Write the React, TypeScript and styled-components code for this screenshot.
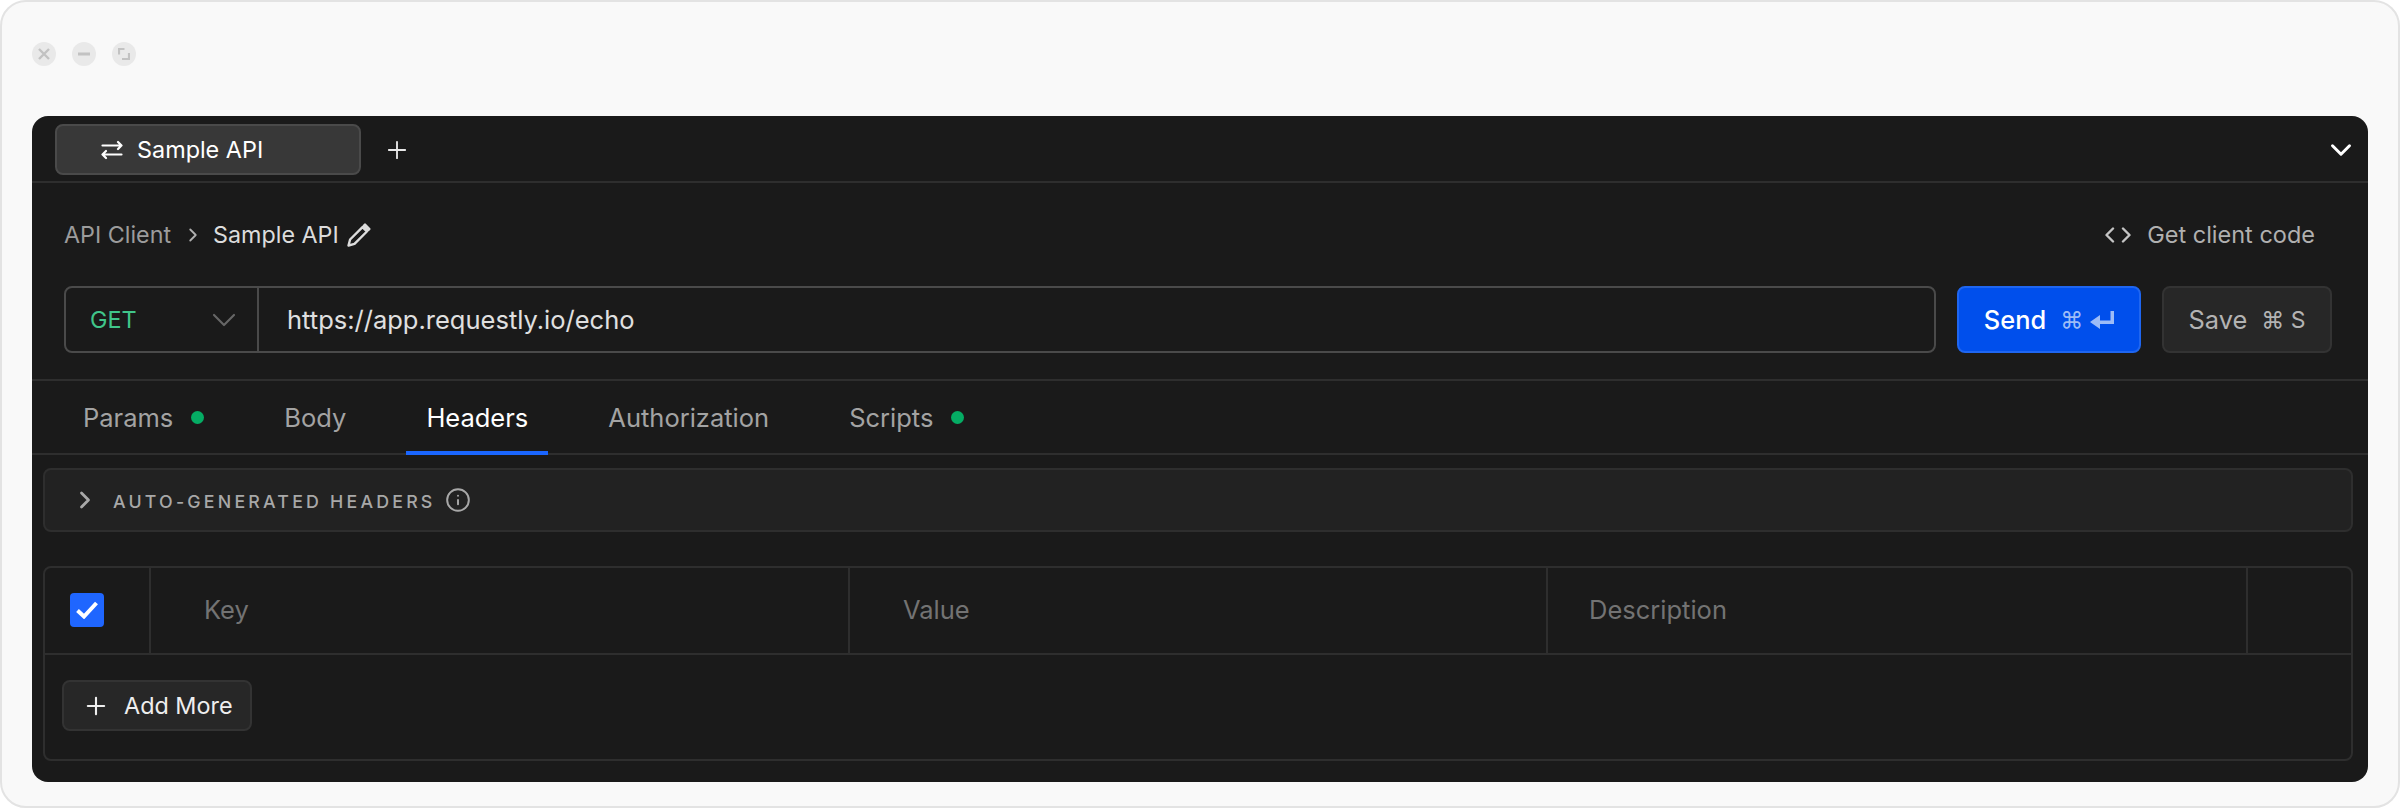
import React from "react";
import styled, { createGlobalStyle } from "styled-components";
import { ChevronDown, ChevronRight, Info, Plus } from "lucide-react";

const Global = createGlobalStyle`
  html, body { margin: 0; padding: 0; background: #fff; }
  * { box-sizing: border-box; }
  body { font-family: Inter, "Noto Sans", sans-serif; }
`;

const Frame = styled.div`
  width: 2400px; height: 808px; background: #f9f9f9; border: 2px solid #e3e3e3; border-radius: 26px;
  padding: 40px 30px 24px 30px; display: flex; flex-direction: column; overflow: hidden;
`;
const Controls = styled.div`display: flex; gap: 16px; height: 24px; margin-bottom: 50px;`;
const Dot = styled.div`
  width: 24px; height: 24px; border-radius: 50%; background: #e9e9e9;
  display: flex; align-items: center; justify-content: center; color: #c2c2c2;
`;
const Panel = styled.div`
  flex: 1; background: #1a1a1a; border-radius: 16px; display: flex; flex-direction: column; overflow: hidden;
`;
const TabBar = styled.div`
  height: 67px; flex: none; border-bottom: 2px solid #2e2e2e; display: flex; align-items: flex-start;
  padding: 8px 10px 0 23px;
`;
const RequestTab = styled.div`
  width: 306px; height: 51px; background: #383838; border: 2px solid #4a4a4a; border-radius: 8px;
  display: flex; align-items: center; gap: 14px; padding-left: 44px; color: #fff; font-size: 23.4px;
`;
const NewTab = styled.div`
  margin-left: 22px; height: 51px; display: flex; align-items: center; color: #e8e8e8;
`;
const Collapse = styled.div`
  margin-left: auto; height: 51px; display: flex; align-items: center; color: #fff;
`;
const Header = styled.div`
  height: 103px; flex: none; padding: 0 53px 0 32px; display: flex; align-items: center; justify-content: space-between;
`;
const Crumbs = styled.div`display: flex; align-items: center; font-size: 23.3px; color: #9c9c9c;`;
const CrumbSep = styled.span`display: flex; margin: 0 9px 0 11px; color: #b0b0b0;`;
const CrumbCurrent = styled.span`color: #dcdcdc; margin-right: 7px;`;
const CodeLink = styled.div`display: flex; align-items: center; gap: 16px; font-size: 23.5px; color: #b0b0b0;`;
const RequestRow = styled.div`
  height: 95px; flex: none; padding: 0 36px 0 32px; display: flex; gap: 21px; border-bottom: 2px solid #2e2e2e; align-items: flex-start;
`;
const UrlBox = styled.div`
  flex: 1; height: 67px; border: 2px solid #4a4a4a; border-radius: 8px; display: flex; align-items: stretch;
`;
const Method = styled.div`
  width: 193px; border-right: 2px solid #4a4a4a; display: flex; align-items: center; justify-content: space-between;
  padding: 0 13px 0 24px; color: #40c58a; font-size: 23.4px;
`;
const MethodCaret = styled.span`display: flex; color: #666;`;
const Url = styled.div`
  flex: 1; display: flex; align-items: center; padding-left: 28px; font-size: 25.5px; color: #e0e0e0;
`;
const Action = styled.div<{ $primary?: boolean }>`
  height: 67px; flex: none; width: ${(p) => (p.$primary ? "184px" : "170px")};
  border-radius: 8px; display: flex; align-items: center; justify-content: center; font-size: 25.4px;
  font-weight: ${(p) => (p.$primary ? 450 : 400)};
  background: ${(p) => (p.$primary ? "#004fec" : "#272727")};
  border: 2px solid ${(p) => (p.$primary ? "#1f66f0" : "#333")};
  color: ${(p) => (p.$primary ? "#fff" : "#b3b3b3")};
`;
const Shortcut = styled.span<{ $primary?: boolean }>`
  margin-left: 14px; display: flex; align-items: center; gap: 7px; font-size: 23px; font-weight: 400;
  font-family: Inter, "DejaVu Sans", sans-serif;
  color: ${(p) => (p.$primary ? "#9dbcf7" : "#b3b3b3")};
`;
const Tabs = styled.div`
  height: 74px; flex: none; border-bottom: 2px solid #2e2e2e; display: flex; padding-left: 31px; gap: 40px; align-items: stretch;
`;
const TabItem = styled.div<{ $active?: boolean }>`
  position: relative; padding: 0 20px; display: flex; align-items: center; gap: 18px;
  font-size: 25.5px;
  color: ${(p) => (p.$active ? "#fff" : "#a3a3a3")}; font-weight: ${(p) => (p.$active ? 440 : 400)};
  &::after {
    content: ""; position: absolute; left: 0; right: 0; bottom: -2px; height: 4px;
    background: ${(p) => (p.$active ? "#1a66ff" : "transparent")};
  }
`;
const StatusDot = styled.span`width: 13px; height: 13px; border-radius: 50%; background: #05ac64;`;
const Body = styled.div`flex: 1; padding: 13px 15px 21px 11px; display: flex; flex-direction: column; gap: 34px;`;
const AutoBox = styled.div`
  height: 64px; flex: none; background: #222; border: 2px solid #2e2e2e; border-radius: 8px;
  display: flex; align-items: center; padding-left: 26px; color: #a8a8a8;
`;
const AutoLabel = styled.span`
  margin-left: 14px; padding-top: 2px; font-size: 17.8px; font-weight: 500; letter-spacing: 3.2px;
`;
const AutoInfo = styled.span`display: flex; margin-left: 9px;`;
const Table = styled.div`
  flex: 1; border: 2px solid #2e2e2e; border-radius: 8px; display: flex; flex-direction: column;
`;
const HeadRow = styled.div`
  height: 87px; flex: none; border-bottom: 2px solid #2e2e2e; display: grid; grid-template-columns: 106px 699px 698px 700px 1fr;
`;
const Cell = styled.div<{ $last?: boolean; $inset?: number }>`
  border-right: ${(p) => (p.$last ? "none" : "2px solid #2e2e2e")}; display: flex; align-items: center;
  padding-left: ${(p) => p.$inset ?? 53}px; padding-bottom: 2px;
  font-size: 25.5px; color: #737373;
`;
const Checkbox = styled.div`
  width: 34px; height: 34px; border-radius: 4px; background: #1f66ff; display: flex; align-items: center; justify-content: center;
`;
const AddArea = styled.div`padding: 25px 0 0 17px;`;
const AddButton = styled.div`
  width: 190px; height: 51px; background: #272727; border: 2px solid #333; border-radius: 8px;
  display: flex; align-items: center; gap: 14px; padding-left: 18px; color: #eee; font-size: 23.4px;
`;

const ArrowsIcon = () => (
  <svg width="22" height="20" viewBox="0 0 22 20" fill="none" stroke="#fff" strokeWidth="2.2" strokeLinecap="round" strokeLinejoin="round">
    <path d="M1.500 5.500h19M17 2l3.500 3.500L17 9" />
    <path d="M20.500 14.500h-19M5 11l-3.500 3.500L5 18" />
  </svg>
);
const PencilIcon = () => (
  <svg width="26" height="26" viewBox="0 0 26 26" fill="none" stroke="#dcdcdc" strokeWidth="2.4" strokeLinejoin="round">
    <path d="M2.500 23.500l1.600-6L16.500 5.100l4.400 4.400L8.500 21.900l-6 1.600z" />
    <path d="M19 2.600l4.400 4.400-1.200 1.200-4.400-4.400z" fill="#dcdcdc" />
  </svg>
);
const CodeIcon = () => (
  <svg width="26" height="18" viewBox="0 0 26 18" fill="none" stroke="#c4c4c4" strokeWidth="2.4" strokeLinecap="round" strokeLinejoin="round">
    <path d="M8 2.500 1.500 9 8 15.500" />
    <path d="M18 2.500 24.500 9 18 15.500" />
  </svg>
);
const ReturnIcon = () => (
  <svg width="24" height="18" viewBox="0 0 24 18" fill="#9dbcf7">
    <path d="M20.500 0H24v13H10v5L0 11l10-7v5.500h10.500z" />
  </svg>
);
const CheckIcon = () => (
  <svg width="22" height="18" viewBox="0 0 22 18" fill="none" stroke="#fff" strokeWidth="4">
    <path d="M1.500 9.500 8 15.500 20.500 2" />
  </svg>
);

export default function App() {
  return (
    <Frame>
      <Global />
      <Controls>
        <Dot>
          <svg width="12" height="12" viewBox="0 0 12 12" stroke="currentColor" strokeWidth="2.4"><path d="M1 1l10 10M11 1 1 11" /></svg>
        </Dot>
        <Dot>
          <svg width="12" height="4" viewBox="0 0 12 4" fill="currentColor"><rect width="12" height="3" y="0.5" /></svg>
        </Dot>
        <Dot>
          <svg width="12" height="12" viewBox="0 0 12 12" fill="none" stroke="currentColor" strokeWidth="2.2"><path d="M6.500 1H1v5.500" /><path d="M4 11h7V5" /></svg>
        </Dot>
      </Controls>
      <Panel>
        <TabBar>
          <RequestTab><ArrowsIcon />Sample API</RequestTab>
          <NewTab><Plus size={28} strokeWidth={1.6} /></NewTab>
          <Collapse><ChevronDown size={34} strokeWidth={2.1} /></Collapse>
        </TabBar>
        <Header>
          <Crumbs>
            API Client
            <CrumbSep><ChevronRight size={22} strokeWidth={2} /></CrumbSep>
            <CrumbCurrent>Sample API</CrumbCurrent>
            <PencilIcon />
          </Crumbs>
          <CodeLink><CodeIcon />Get client code</CodeLink>
        </Header>
        <RequestRow>
          <UrlBox>
            <Method>GET<MethodCaret><ChevronDown size={40} strokeWidth={1.3} /></MethodCaret></Method>
            <Url>https://app.requestly.io/echo</Url>
          </UrlBox>
          <Action $primary>Send<Shortcut $primary>⌘<ReturnIcon /></Shortcut></Action>
          <Action>Save<Shortcut>⌘ S</Shortcut></Action>
        </RequestRow>
        <Tabs>
          <TabItem>Params<StatusDot /></TabItem>
          <TabItem>Body</TabItem>
          <TabItem $active>Headers</TabItem>
          <TabItem>Authorization</TabItem>
          <TabItem>Scripts<StatusDot /></TabItem>
        </Tabs>
        <Body>
          <AutoBox>
            <ChevronRight size={28} strokeWidth={2.4} />
            <AutoLabel>AUTO-GENERATED HEADERS</AutoLabel>
            <AutoInfo><Info size={26} strokeWidth={1.8} /></AutoInfo>
          </AutoBox>
          <Table>
            <HeadRow>
              <Cell $inset={25}><Checkbox><CheckIcon /></Checkbox></Cell>
              <Cell>Key</Cell>
              <Cell>Value</Cell>
              <Cell $inset={41}>Description</Cell>
              <Cell $last />
            </HeadRow>
            <AddArea>
              <AddButton><Plus size={28} strokeWidth={1.8} />Add More</AddButton>
            </AddArea>
          </Table>
        </Body>
      </Panel>
    </Frame>
  );
}
